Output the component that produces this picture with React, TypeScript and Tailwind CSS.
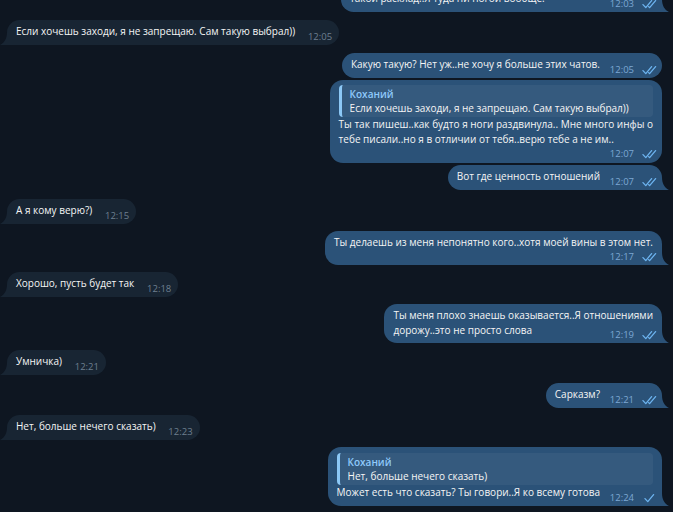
import React from "react";

type Msg = {
  out: boolean;
  lines: string[];
  time: string;
  check?: "double" | "single";
  reply?: { name: string; text: string };
  timeBelow?: boolean;
  tail?: boolean;
  mt: string;
  pad: string;
  w?: string;
};

const Check = ({ double }: { double: boolean }) => (
  <svg width="15" height="10" viewBox="0 0 15 10" fill="none" stroke="#6db4f0" strokeWidth="1.3" strokeLinecap="round" strokeLinejoin="round" className="ml-[8px]">
    {double ? (
      <>
        <path d="M1 5.6 L3.8 8.6 L9.6 1.6" />
        <path d="M6.6 7.6 L7.6 8.6 L13.6 1.6" />
      </>
    ) : (
      <path d="M3 5.6 L5.8 8.6 L11.6 1.6" />
    )}
  </svg>
);

const msgs: Msg[] = [
  { out: true, lines: ["такой расклад..Я туда ни ногой вообще."], time: "12:03", check: "double", tail: true, mt: "mt-[-13px]", pad: "pt-[4px] pb-[6px]", w: "w-[321px]" },
  { out: false, lines: ["Если хочешь заходи, я не запрещаю. Сам такую выбрал))"], time: "12:05", tail: true, mt: "mt-[8px]", pad: "pt-[4px] pb-[6px]" },
  { out: true, lines: ["Какую такую? Нет уж..не хочу я больше этих чатов."], time: "12:05", check: "double", mt: "mt-[8px]", pad: "pt-[4px] pb-[6px]" },
  {
    out: true,
    reply: { name: "Коханий", text: "Если хочешь заходи, я не запрещаю. Сам такую выбрал))" },
    lines: ["Ты так пишеш..как будто я ноги раздвинула.. Мне много инфы о", "тебе писали..но я в отличии от тебя..верю тебе а не им.."],
    time: "12:07",
    check: "double",
    timeBelow: true,
    mt: "mt-[2px]",
    pad: "pt-[5px] pb-[3px]",
  },
  { out: true, lines: ["Вот где ценность отношений"], time: "12:07", check: "double", tail: true, mt: "mt-[2px]", pad: "pt-[4px] pb-[6px]" },
  { out: false, lines: ["А я кому верю?)"], time: "12:15", tail: true, mt: "mt-[9px]", pad: "pt-[4px] pb-[6px]" },
  { out: true, lines: ["Ты делаешь из меня непонятно кого..хотя моей вины в этом нет."], time: "12:17", check: "double", timeBelow: true, tail: true, mt: "mt-[7px]", pad: "pt-[4px] pb-[2px]" },
  { out: false, lines: ["Хорошо, пусть будет так"], time: "12:18", tail: true, mt: "mt-[7px]", pad: "pt-[4px] pb-[6px]" },
  { out: true, lines: ["Ты меня плохо знаешь оказывается..Я отношениями", "дорожу..это не просто слова"], time: "12:19", check: "double", tail: true, mt: "mt-[7px]", pad: "pt-[4px] pb-[5px]" },
  { out: false, lines: ["Умничка)"], time: "12:21", tail: true, mt: "mt-[7px]", pad: "pt-[4px] pb-[6px]" },
  { out: true, lines: ["Сарказм?"], time: "12:21", check: "double", tail: true, mt: "mt-[8px]", pad: "pt-[4px] pb-[6px]" },
  { out: false, lines: ["Нет, больше нечего сказать)"], time: "12:23", tail: true, mt: "mt-[7px]", pad: "pt-[4px] pb-[6px]" },
  {
    out: true,
    reply: { name: "Коханий", text: "Нет, больше нечего сказать)" },
    lines: ["Может есть что сказать? Ты говори..Я ко всему готова"],
    time: "12:24",
    check: "single",
    tail: true,
    mt: "mt-[7px]",
    pad: "pt-[6px] pb-[6px]",
  },
];

const TimeBlock = ({ m }: { m: Msg }) => (
  <span className={`flex items-center text-[9.5px] leading-[12px] ${m.out ? "text-[#7da8d3]" : "text-[#6d7f8f]"}`}>
    {m.time}
    {m.out && <Check double={m.check === "double"} />}
  </span>
);

const Bubble = ({ m }: { m: Msg }) => {
  const bg = m.out ? "bg-[#2b5278]" : "bg-[#182533]";
  const corner = m.tail ? (m.out ? "rounded-[13px] rounded-br-none" : "rounded-[13px] rounded-bl-none") : "rounded-[13px]";
  return (
    <div className={`flex ${m.out ? "justify-end" : "justify-start"} ${m.mt}`}>
      <div className={`relative ${bg} ${corner} ${m.w ?? ""} pl-[9px] pr-[9px] ${m.pad} text-[10px] leading-[15px] text-[#f5f5f5]`}>
        {m.reply && (
          <div className="rounded-[4px] border-l-[3px] border-[#8cc8f6] bg-[rgba(255,255,255,0.05)] pl-[8px] pr-[8px] py-[2px]">
            <div className="font-semibold leading-[14px] text-[#8fc9fb]">{m.reply.name}</div>
            <div className="leading-[14px] whitespace-nowrap">{m.reply.text}</div>
          </div>
        )}
        <div className="whitespace-nowrap">
          {m.lines.map((l, i) => (
            <div key={i}>
              {l}
              {!m.timeBelow && i === m.lines.length - 1 && (
                <span className={m.out ? "inline-block w-[53px]" : "inline-block w-[35px]"} />
              )}
            </div>
          ))}
        </div>
        {m.timeBelow ? (
          <div className="flex justify-end mr-[-4px] h-[13px] items-center">
            <TimeBlock m={m} />
          </div>
        ) : (
          <div className={`absolute bottom-[2px] ${m.out ? "right-[5px]" : "right-[7px]"}`}>
            <TimeBlock m={m} />
          </div>
        )}
        {m.tail &&
          (m.out ? (
            <svg className="absolute bottom-0 right-[-7px]" width="7" height="13" viewBox="0 0 7 13">
              <path d="M0 0 C0 6 2 10.5 7 13 L0 13 Z" fill="#2b5278" />
            </svg>
          ) : (
            <svg className="absolute bottom-0 left-[-7px]" width="7" height="13" viewBox="0 0 7 13">
              <path d="M7 0 C7 6 5 10.5 0 13 L7 13 Z" fill="#182533" />
            </svg>
          ))}
      </div>
    </div>
  );
};

export default function App() {
  return (
    <div
      className="w-[673px] h-[512px] overflow-hidden bg-[#0e1621] pl-[7px] pr-[11px] flex flex-col"
      style={{ fontFamily: '"Open Sans", "Noto Sans", sans-serif' }}
    >
      {msgs.map((m, i) => (
        <Bubble key={i} m={m} />
      ))}
    </div>
  );
}
